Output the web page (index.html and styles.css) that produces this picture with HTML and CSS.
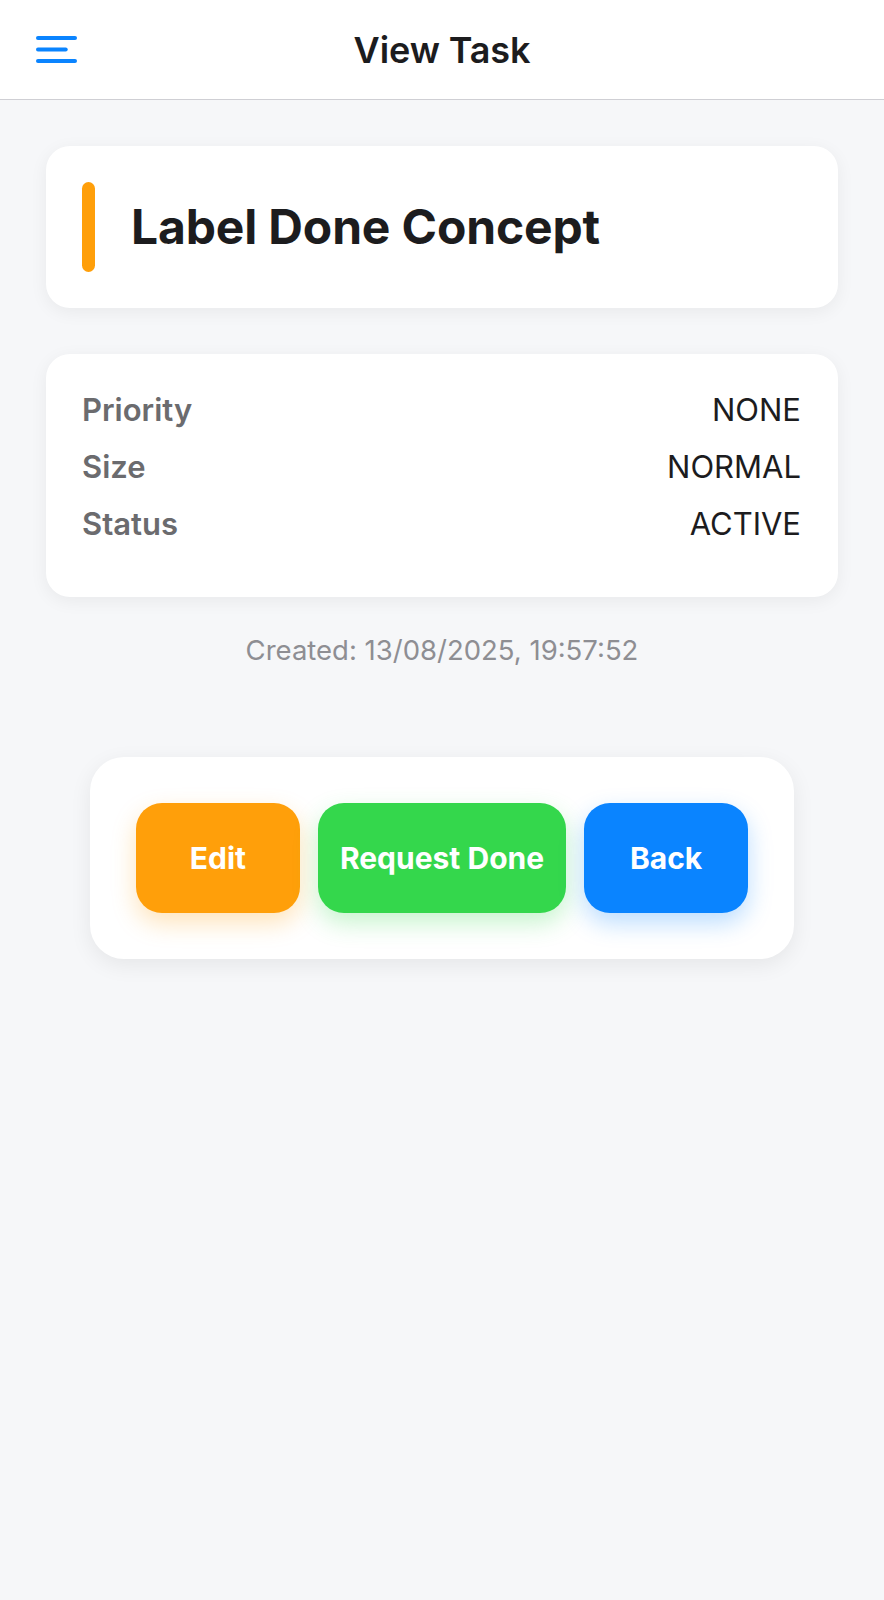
FILE: index.html
```html
<!DOCTYPE html>
<html lang="en">
<head>
<meta charset="utf-8">
<title>View Task</title>
<link rel="stylesheet" href="styles.css">
</head>
<body>
<header class="topbar">
  <div class="topbar-left">
    <button class="menu-btn" aria-label="Menu">
      <svg width="41" height="27" viewBox="0 0 41 27" aria-hidden="true">
        <line x1="2" y1="2" x2="39" y2="2" />
        <line x1="2" y1="13.5" x2="29.7" y2="13.5" />
        <line x1="2" y1="25" x2="39" y2="25" />
      </svg>
    </button>
  </div>
  <h1 class="topbar-title">View Task</h1>
  <div class="topbar-right"></div>
</header>

<main class="content">
  <section class="card title-card">
    <span class="accent-bar"></span>
    <h2 class="task-title">Label Done Concept</h2>
  </section>

  <section class="card details-card">
    <div class="detail-row"><span class="detail-label">Priority</span><span class="detail-value">NONE</span></div>
    <div class="detail-row"><span class="detail-label">Size</span><span class="detail-value">NORMAL</span></div>
    <div class="detail-row"><span class="detail-label">Status</span><span class="detail-value">ACTIVE</span></div>
  </section>

  <p class="created">Created: 13/08/2025, 19:57:52</p>

  <div class="actions">
    <button class="btn btn-edit">Edit</button>
    <button class="btn btn-done">Request Done</button>
    <button class="btn btn-back">Back</button>
  </div>
</main>
</body>
</html>
```

FILE: styles.css
```css
* { box-sizing: border-box; }

html, body {
  margin: 0;
  padding: 0;
}

body {
  background: #f6f7f9;
  font-family: "Inter", "Noto Sans", "Liberation Sans", sans-serif;
  color: #1c1c1e;
  min-height: 1600px;
}

.topbar {
  height: 100px;
  background: #ffffff;
  border-bottom: 1px solid #cfcfd4;
  display: grid;
  grid-template-columns: 1fr auto 1fr;
  align-items: center;
}

.topbar-left {
  padding-left: 36px;
  display: flex;
  align-items: center;
}

.menu-btn {
  border: 0;
  background: transparent;
  padding: 0;
  margin: 0;
  display: block;
  cursor: pointer;
}

.menu-btn svg {
  display: block;
}

.menu-btn line {
  stroke: #0a84ff;
  stroke-width: 4;
  stroke-linecap: round;
}

.topbar-title {
  margin: 0;
  font-size: 36px;
  font-weight: 600;
  line-height: 44px;
  color: #1c1c1e;
  letter-spacing: -0.1px;
}

.content {
  padding: 46px 46px;
  display: flex;
  flex-direction: column;
}

.card {
  background: #ffffff;
  border-radius: 24px;
  box-shadow: 0 4px 18px rgba(0, 0, 0, 0.06);
}

.title-card {
  padding: 36px;
  display: flex;
  align-items: center;
  gap: 36px;
}

.accent-bar {
  width: 13px;
  height: 90px;
  border-radius: 7px;
  background: #ff9f0a;
  flex: none;
}

.task-title {
  margin: 0;
  font-size: 48px;
  font-weight: 700;
  line-height: 58px;
  color: #1c1c1e;
  letter-spacing: -0.15px;
}

.details-card {
  margin-top: 46px;
  padding: 36px 37px 36px 36px;
}

.detail-row {
  display: flex;
  justify-content: space-between;
  align-items: baseline;
  line-height: 39px;
  margin-bottom: 18px;
}

.detail-label {
  font-size: 31px;
  font-weight: 600;
  color: #6b6b6e;
}

.detail-value {
  font-size: 31px;
  font-weight: 400;
  color: #1c1c1e;
}

.created {
  margin: 36px 0 0;
  text-align: center;
  font-size: 27.5px;
  line-height: 34px;
  color: #8e8e93;
}

.actions {
  margin-top: 90px;
  align-self: center;
  background: #ffffff;
  border-radius: 34px;
  padding: 46px;
  display: flex;
  gap: 18px;
  box-shadow: 0 6px 22px rgba(0, 0, 0, 0.07);
}

.btn {
  border: 0;
  height: 110px;
  min-width: 164px;
  padding: 0 22px;
  border-radius: 26px;
  font-family: inherit;
  font-size: 30px;
  font-weight: 650;
  color: #ffffff;
  cursor: pointer;
}

.btn-edit {
  background: #ff9f0a;
  box-shadow: 0 10px 24px rgba(255, 159, 10, 0.28);
}

.btn-done {
  background: #34d74c;
  box-shadow: 0 10px 24px rgba(52, 215, 76, 0.28);
}

.btn-back {
  background: #0a84ff;
  box-shadow: 0 10px 24px rgba(10, 132, 255, 0.28);
}
```
